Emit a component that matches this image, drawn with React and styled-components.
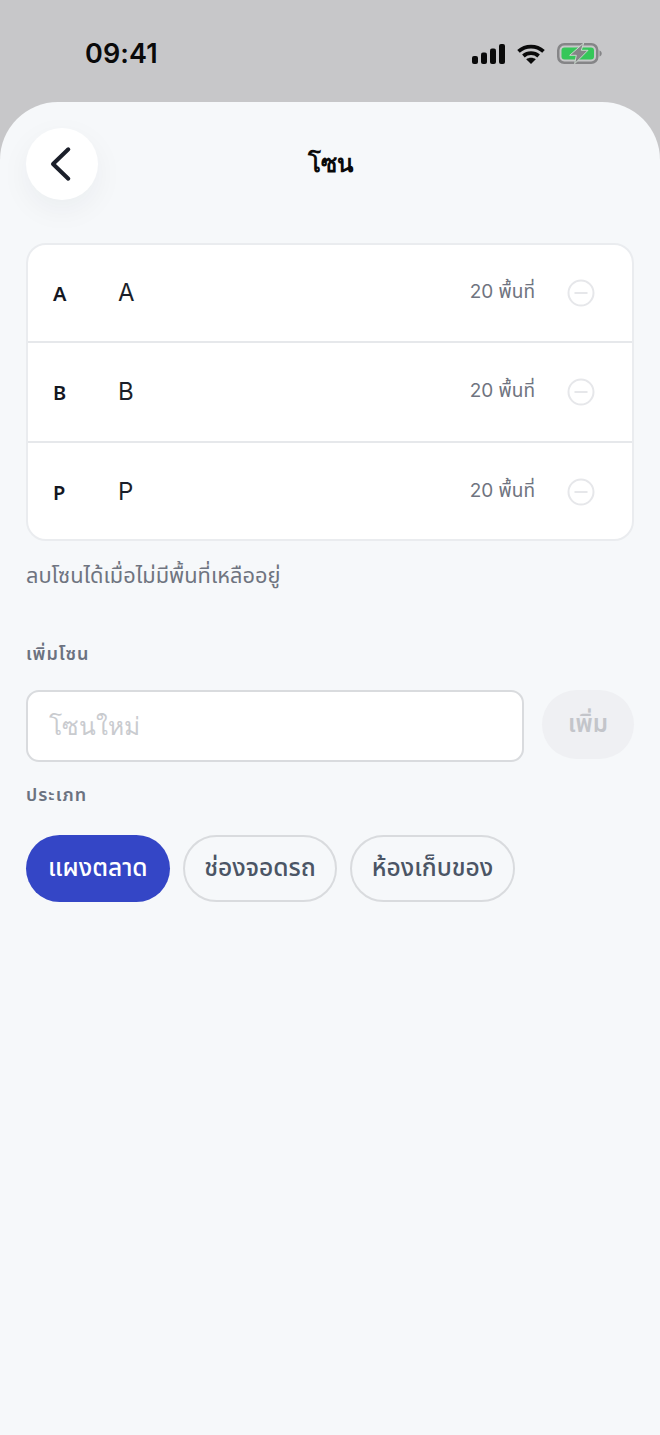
import React from 'react';
import styled, { createGlobalStyle } from 'styled-components';

const GlobalStyle = createGlobalStyle`
  html, body {
    margin: 0;
    padding: 0;
    background: #c7c7c9;
  }
  * {
    box-sizing: border-box;
  }
  body {
    font-family: Inter, "Noto Sans Thai", "Noto Sans", sans-serif;
  }
`;

const Screen = styled.div`
  width: 660px;
  height: 1435px;
  display: flex;
  flex-direction: column;
  overflow: hidden;
  background: #c7c7c9;
`;

const StatusBar = styled.div`
  flex: 0 0 102px;
  display: flex;
  align-items: flex-start;
  justify-content: space-between;
  padding: 37px 58px 0 85px;
`;

const Time = styled.div`
  font-size: 27px;
  line-height: 33px;
  font-weight: 600;
  color: #0a0a0a;
  letter-spacing: 0.1px;
`;

const StatusIcons = styled.div`
  display: flex;
  align-items: center;
  gap: 12px;
  height: 33px;
`;

const Sheet = styled.div`
  flex: 1;
  display: flex;
  flex-direction: column;
  background: #f6f8fa;
  border-radius: 58px 58px 0 0;
  padding: 26px 26px 0;
`;

const Header = styled.div`
  position: relative;
  display: flex;
  align-items: center;
  justify-content: center;
  height: 72px;
`;

const BackButton = styled.button`
  position: absolute;
  left: 0;
  top: 0;
  width: 72px;
  height: 72px;
  padding: 0;
  border: 0;
  border-radius: 50%;
  background: #fff;
  box-shadow: 0 10px 30px rgba(20, 30, 50, 0.05);
  display: flex;
  align-items: center;
  justify-content: center;
`;

const Title = styled.h1`
  margin: 0;
  font-family: Inter, "Noto Sans", sans-serif;
  font-size: 24px;
  line-height: 40px;
  font-weight: 700;
  color: #0a0a0a;
`;

const ZoneCard = styled.div`
  margin-top: 43px;
  background: #fff;
  border: 2px solid #eaecef;
  border-radius: 20px;
  overflow: hidden;
`;

const ZoneRow = styled.div`
  height: 100px;
  display: flex;
  align-items: center;
  padding: 0 37px 0 25px;
  border-top: 2px solid #e6e8eb;
  &:first-child {
    height: 96px;
    border-top: 0;
  }
  &:last-child {
    height: 98px;
    padding-top: 2px;
  }
`;

const ZoneCode = styled.div`
  width: 65px;
  font-family: "Noto Sans", sans-serif;
  font-size: 20px;
  font-weight: 600;
  color: #14171f;
`;

const ZoneName = styled.div`
  flex: 1;
  margin-bottom: 2px;
  font-size: 24px;
  color: #1b1f2a;
`;

const ZoneCount = styled.div`
  margin: 0 32px 2px 0;
  font-size: 19px;
  color: #6f7480;
`;

const RemoveIcon = styled.svg`
  display: block;
`;

const Hint = styled.p`
  margin: 18px 0 0;
  font-size: 21.8px;
  line-height: 32px;
  color: #6f7480;
`;

const FieldLabel = styled.div`
  font-size: 18px;
  line-height: 26px;
  font-weight: 600;
  letter-spacing: 1px;
  color: #6b7280;
  margin-top: ${(p) => p.$top}px;
`;

const AddRow = styled.div`
  display: flex;
  gap: 18px;
  margin-top: 23px;
`;

const NameInput = styled.input`
  flex: 1;
  min-width: 0;
  height: 72px;
  padding: 0 21px;
  background: #fff;
  border: 2px solid #d9dbde;
  border-radius: 13px;
  font-family: Inter, "Noto Sans", sans-serif;
  font-size: 24.5px;
  outline: none;
  &::placeholder {
    color: #c9cbcf;
    opacity: 1;
  }
`;

const AddButton = styled.button`
  flex: 0 0 92px;
  height: 69px;
  padding: 0;
  border: 0;
  border-radius: 35px;
  background: #eff0f3;
  color: #c3c5ca;
  font-family: inherit;
  font-size: 24px;
  font-weight: 600;
`;

const Chips = styled.div`
  display: flex;
  gap: 13px;
  margin-top: 27px;
`;

const Chip = styled.button`
  height: 67px;
  padding: 0 ${(p) => (p.$active ? 22 : 19.5)}px;
  border-radius: 34px;
  border: ${(p) => (p.$active ? '0' : '2px solid #d9dbde')};
  background: ${(p) => (p.$active ? '#3446c6' : 'transparent')};
  color: ${(p) => (p.$active ? '#fff' : '#4b5565')};
  font-family: inherit;
  font-size: 24.6px;
  font-weight: 500;
`;

const zones = [
  { code: 'A', name: 'A', count: '20 พื้นที่' },
  { code: 'B', name: 'B', count: '20 พื้นที่' },
  { code: 'P', name: 'P', count: '20 พื้นที่' },
];

const types = ['แผงตลาด', 'ช่องจอดรถ', 'ห้องเก็บของ'];

const Signal = () => (
  <svg width="33" height="20" viewBox="0 0 33 20" fill="#0a0a0a">
    <rect x="0" y="12" width="6" height="8" rx="2" />
    <rect x="9" y="8.5" width="6" height="11.5" rx="2" />
    <rect x="18" y="4.5" width="6" height="15.5" rx="2" />
    <rect x="27" y="0" width="6" height="20" rx="2" />
  </svg>
);

const Wifi = () => (
  <svg width="28" height="20" viewBox="0 0 28 20" fill="none" stroke="#0a0a0a" strokeWidth="3.8">
    <path d="M1.500 7.400C8.600 1 19.400 1 26.500 7.400" />
    <path d="M6.400 12C10.700 8.200 17.300 8.200 21.600 12" />
    <path d="M14 20l-4.800-4.800c2.700-2 6.900-2 9.600 0z" fill="#0a0a0a" stroke="none" />
  </svg>
);

const Battery = () => (
  <svg width="45" height="21" viewBox="0 0 45 21">
    <rect x="1.250" y="1.250" width="39" height="18.500" rx="6" fill="none" stroke="#858587" strokeWidth="2.500" />
    <rect x="4.500" y="4.500" width="32.500" height="12" rx="3" fill="#35c759" />
    <path d="M42.500 7.500v6c1.500-.5 2.200-1.600 2.200-3s-.7-2.500-2.200-3z" fill="#858587" />
    <path d="M26.700 0 12.700 12.300h6.600L17.700 20.700 31 7.300h-6.700z" fill="#858587" stroke="#c9d8cc" strokeWidth="1" />
  </svg>
);

const App = () => {
  return (
    <Screen>
      <GlobalStyle />
      <StatusBar>
        <Time>09:41</Time>
        <StatusIcons>
          <Signal />
          <Wifi />
          <Battery />
        </StatusIcons>
      </StatusBar>
      <Sheet>
        <Header>
          <BackButton aria-label="back">
            <svg width="26" height="36" viewBox="0 0 26 36" fill="none" stroke="#1b1f2a" strokeWidth="4" strokeLinecap="round" strokeLinejoin="round">
              <path d="M19.300 3.300 4 18l15.300 14.700" />
            </svg>
          </BackButton>
          <Title>โซน</Title>
        </Header>

        <ZoneCard>
          {zones.map((z) => (
            <ZoneRow key={z.code}>
              <ZoneCode>{z.code}</ZoneCode>
              <ZoneName>{z.name}</ZoneName>
              <ZoneCount>{z.count}</ZoneCount>
              <RemoveIcon width="28" height="28" viewBox="0 0 28 28" fill="none" stroke="#e6e7ea" strokeWidth="2">
                <circle cx="14" cy="14" r="12.500" />
                <path d="M7.500 14h13" />
              </RemoveIcon>
            </ZoneRow>
          ))}
        </ZoneCard>

        <Hint>ลบโซนได้เมื่อไม่มีพื้นที่เหลืออยู่</Hint>

        <FieldLabel $top={50}>เพิ่มโซน</FieldLabel>
        <AddRow>
          <NameInput placeholder="โซนใหม่" readOnly />
          <AddButton>เพิ่ม</AddButton>
        </AddRow>

        <FieldLabel $top={20}>ประเภท</FieldLabel>
        <Chips>
          {types.map((t, i) => (
            <Chip key={t} $active={i === 0}>{t}</Chip>
          ))}
        </Chips>
      </Sheet>
    </Screen>
  );
};

export default App;
